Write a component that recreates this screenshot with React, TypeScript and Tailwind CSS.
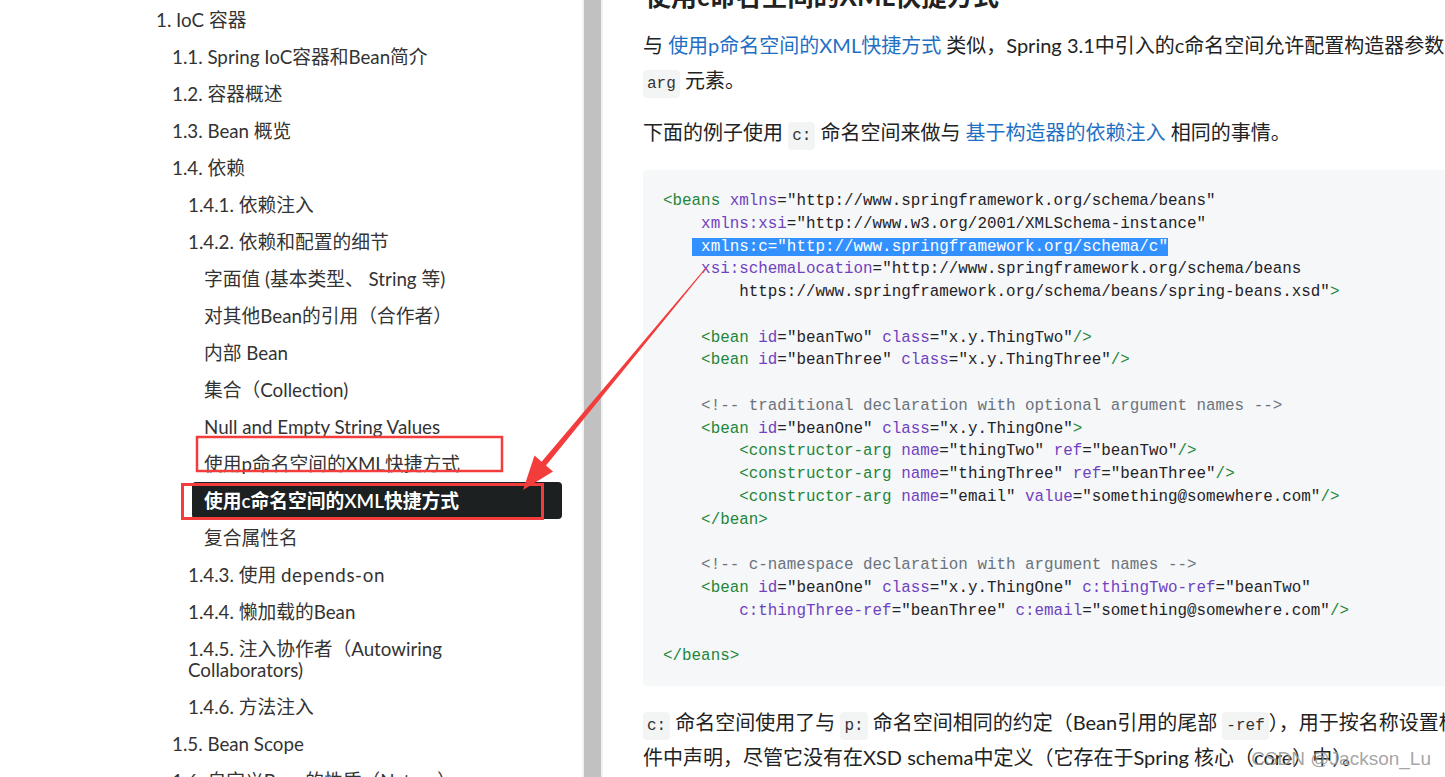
const SANS = "font-['Lato','Noto_Sans_CJK_SC',sans-serif]";
const MONO = "font-['Liberation_Mono',monospace]";

type TocItem = { label: React.ReactNode; level: 1 | 2 | 3 | 4; active?: boolean; wrap?: boolean };

const TOC: TocItem[] = [
    { label: "1. IoC 容器", level: 1 },
    { label: "1.1. Spring IoC容器和Bean简介", level: 2 },
    { label: "1.2. 容器概述", level: 2 },
    { label: "1.3. Bean 概览", level: 2 },
    { label: "1.4. 依赖", level: 2 },
    { label: "1.4.1. 依赖注入", level: 3 },
    { label: "1.4.2. 依赖和配置的细节", level: 3 },
    { label: "字面值 (基本类型、 String 等)", level: 4 },
    { label: "对其他Bean的引用（合作者）", level: 4 },
    { label: "内部 Bean", level: 4 },
    { label: "集合（Collection)", level: 4 },
    { label: "Null and Empty String Values", level: 4 },
    { label: "使用p命名空间的XML快捷方式", level: 4 },
    { label: "使用c命名空间的XML快捷方式", level: 4, active: true },
    { label: "复合属性名", level: 4 },
    { label: <>1.4.3. 使用 <span className="tracking-[0.6px]">depends-on</span></>, level: 3 },
    { label: "1.4.4. 懒加载的Bean", level: 3 },
    { label: <>1.4.5. 注入协作者（Autowiring<br />Collaborators)</>, level: 3, wrap: true },
    { label: "1.4.6. 方法注入", level: 3 },
    { label: "1.5. Bean Scope", level: 2 },
    { label: "1.6. 自定义Bean的性质（Nature）", level: 2 },
];

const INDENT = { 1: "ml-[144px]", 2: "ml-[160px]", 3: "ml-[176px]", 4: "ml-[192px]" };

const CODE = [
    '<beans xmlns="http://www.springframework.org/schema/beans"',
    '    xmlns:xsi="http://www.w3.org/2001/XMLSchema-instance"',
    null, // selected line, drawn by hand
    '    xsi:schemaLocation="http://www.springframework.org/schema/beans',
    '        https://www.springframework.org/schema/beans/spring-beans.xsd">',
    '',
    '    <bean id="beanTwo" class="x.y.ThingTwo"/>',
    '    <bean id="beanThree" class="x.y.ThingThree"/>',
    '',
    '    <!-- traditional declaration with optional argument names -->',
    '    <bean id="beanOne" class="x.y.ThingOne">',
    '        <constructor-arg name="thingTwo" ref="beanTwo"/>',
    '        <constructor-arg name="thingThree" ref="beanThree"/>',
    '        <constructor-arg name="email" value="something@somewhere.com"/>',
    '    </bean>',
    '',
    '    <!-- c-namespace declaration with argument names -->',
    '    <bean id="beanOne" class="x.y.ThingOne" c:thingTwo-ref="beanTwo"',
    '        c:thingThree-ref="beanThree" c:email="something@somewhere.com"/>',
    '',
    '</beans>',
];

const TOKEN = /(<!--.*?-->)|(<\/?[\w-]+>?|\/>|>)|([\w:.-]+(?==))|("[^"<>]*"?)|(\s+|=|[^\s"<>=]+)/g;

function highlight(line: string) {
    const out: React.ReactNode[] = [];
    let m: RegExpExecArray | null;
    let i = 0;
    TOKEN.lastIndex = 0;
    while ((m = TOKEN.exec(line))) {
        const cls = m[1] ? "text-[#6a737d]"
            : m[2] ? "text-[#22863a]"
                : m[3] ? "text-[#6f42c1]"
                    : "text-[#1f2328]";
        out.push(<span key={i++} className={cls}>{m[0]}</span>);
    }
    return out;
}

function Chip({ children }: { children: React.ReactNode }) {
    return <code className={`${MONO} inline-block text-[16px] leading-[28px] px-[4px] rounded-[4px] bg-[#f3f4f4] text-[#333]`}>{children}</code>;
}

function Link({ children }: { children: React.ReactNode }) {
    return <span className="text-[#1f6fc5]">{children}</span>;
}

function Sidebar() {
    return <aside className={`${SANS} w-[582px] shrink-0 pt-[1px] text-[18.75px] text-[#333]`}>
        {TOC.map((item, i) => (
            <div key={i}
                className={`${INDENT[item.level]} mr-[20px] px-[12px] py-[8px] leading-[21px] whitespace-nowrap rounded-[4px] overflow-hidden
                    ${item.wrap ? "h-[58px]" : "h-[37px]"}
                    ${item.active ? "bg-[#1c2021] text-white font-semibold" : ""}`}>
                {item.label}
            </div>
        ))}
    </aside>
}

function Scrollbar() {
    return <div className="w-[21px] shrink-0 bg-[#f1f1f1] flex justify-center">
        <div className="w-[17px] h-full bg-[#c1c1c1]" />
    </div>
}

function Content() {
    return <main className={`${SANS} flex-1 min-w-0 overflow-hidden pl-[40px] text-[20px] text-[#222]`}>
        <div className="h-[9px] overflow-hidden flex items-end">
            <h2 className="text-[26px] font-bold leading-[26px] whitespace-nowrap pl-[2px]">使用c命名空间的XML快捷方式</h2>
        </div>

        <div className="mt-[19px] leading-[35px] whitespace-nowrap">
            <div>与 <Link>使用p命名空间的XML快捷方式</Link> 类似，Spring 3.1中引入的c命名空间允许配置构造器参数的内联属性，而不是嵌套的 <Chip>constructor-</Chip></div>
            <div><Chip>arg</Chip> 元素。</div>
        </div>

        <div className="mt-[17px] leading-[35px] whitespace-nowrap">
            下面的例子使用 <Chip>c:</Chip> 命名空间来做与 <Link>基于构造器的依赖注入</Link> 相同的事情。
        </div>

        <pre className={`${MONO} mt-[20px] w-[1000px] rounded-[4px] bg-[#f6f7f8] pt-[20px] pb-[18px] pl-[20px] text-[15.88px] leading-[22.75px]`}>
            {CODE.map((line, i) => (
                <div key={i} className="h-[22.75px]">
                    {line === null
                        ? <><span>{"   "}</span><span className="bg-[#3390ff] text-white">{' xmlns:c="http://www.springframework.org/schema/c"'}</span></>
                        : highlight(line)}
                </div>
            ))}
        </pre>

        <div className="mt-[19px] leading-[34px] whitespace-nowrap">
            <div><Chip>c:</Chip> 命名空间使用了与 <Chip>p:</Chip> 命名空间相同的约定（Bean引用的尾部 <Chip>-ref</Chip>），用于按名称设置构造器参数。同样，它需要在XML文</div>
            <div>件中声明，尽管它没有在XSD schema中定义（它存在于Spring 核心（core）中）。</div>
        </div>
    </main>
}

function Annotations() {
    // red marker boxes + arrow drawn over the screenshot
    return <svg className="absolute inset-0 pointer-events-none" width="1445" height="777">
        <rect x="197" y="437" width="305" height="34" fill="none" stroke="#f33d3d" strokeWidth="2.5" />
        <rect x="182.5" y="484.5" width="360" height="34" fill="none" stroke="#f33d3d" strokeWidth="3" />
        <polygon fill="#f33d3d"
            points="705.6,267.7 706.4,268.3 546,465.5 553,471.5 523,490 534.5,455.5 541.6,461.8" />
    </svg>
}

export default function App() {
    return <div className="relative w-[1445px] h-[777px] overflow-hidden bg-white flex">
        <Sidebar />
        <Scrollbar />
        <Content />
        <Annotations />
        <div className="absolute right-[14px] bottom-[4px] text-[19px] text-[#9a9a9a]/90 font-['Liberation_Sans',sans-serif]">CSDN @Jackson_Lu</div>
    </div>
}
